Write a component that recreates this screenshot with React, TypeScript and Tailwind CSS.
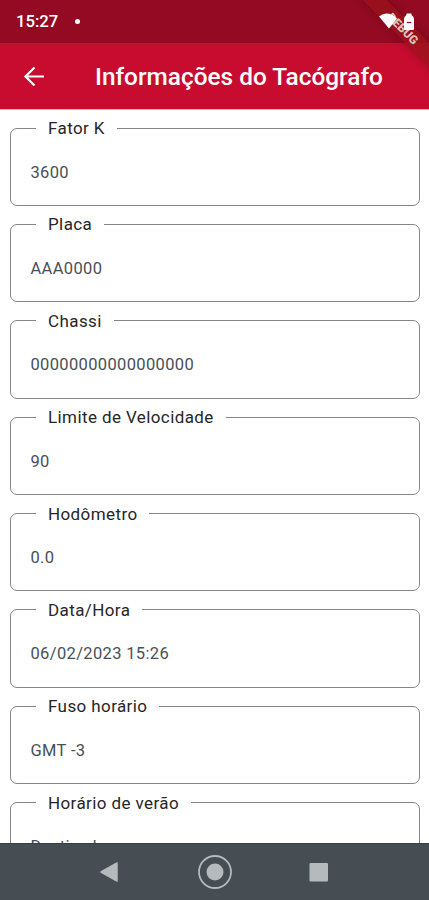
const fields = [
  { label: "Fator K", value: "3600" },
  { label: "Placa", value: "AAA0000" },
  { label: "Chassi", value: "00000000000000000" },
  { label: "Limite de Velocidade", value: "90" },
  { label: "Hodômetro", value: "0.0" },
  { label: "Data/Hora", value: "06/02/2023 15:26" },
  { label: "Fuso horário", value: "GMT -3" },
  { label: "Horário de verão", value: "Destivado" },
];

function Field({ label, value }: { label: string; value: string }) {
  return (
    <fieldset className="h-[87.9px] shrink-0 min-w-0 rounded-[7px] border border-[#858585] pl-5">
      <legend className="ml-[5.5px] px-3 text-[17px] leading-5 tracking-[0.4px] text-[#262626]">{label}</legend>
      <div className="pt-[24.5px] text-[16.5px] leading-5 tracking-[0.35px] text-[#485057]">{value}</div>
    </fieldset>
  );
}

function StatusBar() {
  return (
    <div className="flex h-[43px] shrink-0 items-center bg-[#930a22] pl-4 text-white">
      <span className="w-[43px] pt-px text-[16.7px] leading-5 font-medium">15:27</span>
      <span className="ml-[16px] h-[5px] w-[5px] rounded-full bg-white"></span>
      <svg className="relative z-10 mr-[10px] ml-auto h-8 w-[42px]" viewBox="0 0 42 32" fill="#fff">
        <path d="M2 10.500Q10.500 3.500 20 12.500L12 22.500Z" />
        <path d="M29.500 7.500h5v1.500q2.500 1.500 2.500 4V23q0 1-1 1h-8q-1 0-1-1V13q0-2.500 2.500-4Z" />
        <path d="M29.800 16.500h4.500" stroke="#930a22" strokeWidth="1.200" />
      </svg>
    </div>
  );
}

function DebugBanner() {
  return (
    <div className="absolute top-0 right-0 h-[80px] w-[110px] overflow-hidden">
      <div className="absolute top-[20px] left-[24px] flex h-[17px] w-[120px] rotate-45 items-center justify-center bg-[#98131a]/75 text-[12px] font-black text-[#ddc0bc] shadow-[0_0_8px_rgba(60,0,0,0.35)]">
        DEBUG
      </div>
    </div>
  );
}

export default function App() {
  return (
    <div className="relative flex h-[900px] w-[429px] flex-col overflow-hidden bg-white font-[Roboto,sans-serif]">
      <StatusBar />
      <header className="flex h-[67px] shrink-0 items-center border-b border-[#f4a6b1] bg-[#c70c30] text-white">
        <svg className="ml-[22.5px] h-[22px] w-[22px]" viewBox="0 0 22 22" fill="none" stroke="#fff" strokeWidth="2.200">
          <path d="M21 11.500H3M11.500 2.500 2.500 11.500l9 9" />
        </svg>
        <h1 className="ml-[50.5px] pt-0.5 text-[24.4px] font-medium whitespace-nowrap">Informações do Tacógrafo</h1>
      </header>
      <main className="flex min-h-0 flex-1 flex-col gap-[8.5px] overflow-hidden px-[9.5px] pt-2">
        {fields.map((field) => (
          <Field key={field.label} label={field.label} value={field.value} />
        ))}
      </main>
      <nav className="h-[57px] shrink-0 border-t border-[#344047] bg-[#464e53]">
        <svg className="h-14 w-full" viewBox="0 0 429 56" fill="#b5bbbd">
          <path d="M101 28 117 19V37Z" stroke="#b5bbbd" strokeWidth="1.500" strokeLinejoin="round" />
          <circle cx="215" cy="28" r="8.500" />
          <circle cx="215" cy="28" r="16" fill="none" stroke="#b5bbbd" strokeWidth="1.800" />
          <rect x="309.500" y="19" width="18.500" height="18.500" rx="1" />
        </svg>
      </nav>
      <DebugBanner />
    </div>
  );
}
